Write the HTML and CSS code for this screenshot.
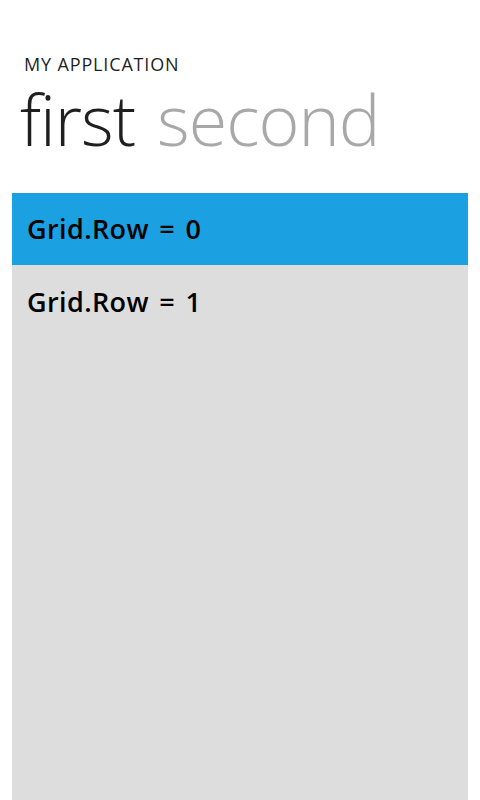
FILE: index.html
```html
<!DOCTYPE html>
<html>
<head>
<meta charset="utf-8">
<link rel="stylesheet" href="styles.css">
</head>
<body>
<div class="page">
  <div class="app-title">MY APPLICATION</div>
  <div class="pivot-headers">
    <span class="pivot-item active">first</span>
    <span class="pivot-item">second</span>
  </div>
  <div class="grid">
    <div class="row row-0">Grid.Row = 0</div>
    <div class="row row-1">Grid.Row = 1</div>
  </div>
</div>
</body>
</html>
```

FILE: styles.css
```css
html, body {
  margin: 0;
  padding: 0;
  background: #ffffff;
  height: 100%;
}
body {
  font-family: "Open Sans", "Noto Sans", sans-serif;
  overflow: hidden;
}
.page {
  display: flex;
  flex-direction: column;
  height: 800px;
}
.app-title {
  font-size: 18px;
  color: #1f1f1f;
  padding: 55px 0 0 24px;
  line-height: 18px;
  letter-spacing: 0.85px;
}
.pivot-headers {
  display: flex;
  gap: 22px;
  padding-left: 20px;
  font-size: 70px;
  font-weight: 300;
  line-height: 92px;
  letter-spacing: -1px;
}
.pivot-item {
  color: #a8a8a8;
}
.pivot-item.active {
  color: #1f1f1f;
}
.grid {
  flex: 1;
  margin: 28px 12px 0 12px;
  display: flex;
  flex-direction: column;
  background: #dddddd;
}
.row {
  font-size: 27px;
  font-weight: 600;
  color: #000000;
  padding-left: 15px;
  line-height: 72px;
  word-spacing: 3px;
  letter-spacing: 0.4px;
}
.row-0 {
  background: #1ba0e1;
  height: 72px;
}
.row-1 {
  line-height: 74px;
}
```
